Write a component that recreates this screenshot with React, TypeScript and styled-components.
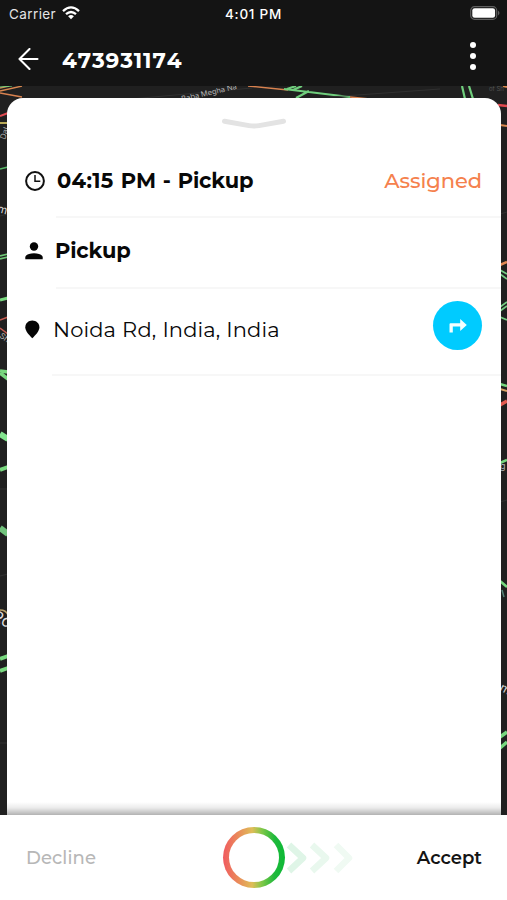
import React from "react";
import styled, { createGlobalStyle } from "styled-components";

const GlobalStyle = createGlobalStyle`
  * { box-sizing: border-box; }
  body { margin: 0; background: #fff; }
`;

const Screen = styled.div`
  display: grid;
  grid-template-rows: 28px 58px 729px 85px;
  width: 507px;
  height: 900px;
  overflow: hidden;
  font-family: Montserrat, Inter, sans-serif;
  color: #080808;
`;

const StatusBar = styled.div`
  display: grid;
  grid-template-columns: 1fr auto 1fr;
  align-items: center;
  padding: 0 7px 0 9px;
  background: #141414;
  color: #fff;
  font-family: Inter, sans-serif;
`;

const Carrier = styled.div`
  display: flex;
  align-items: center;
  gap: 6px;
  font-size: 13.5px;
  letter-spacing: 0.4px;
  color: #e4e4e4;
  svg { margin-top: -2px; }
`;

const Clock = styled.div`
  margin-left: -2px;
  font-size: 13.5px;
  font-weight: 500;
  letter-spacing: 0.75px;
`;

const BatterySlot = styled.div`
  display: flex;
  justify-content: flex-end;
  margin-top: -2px;
`;

const AppBar = styled.header`
  display: flex;
  align-items: center;
  padding: 3px 31px 0 18px;
  background: #141414;
  color: #fff;
  svg { display: block; }
`;

const Title = styled.h1`
  flex: 1;
  margin: 2px 0 0 22px;
  font-size: 21.5px;
  line-height: 26px;
  font-weight: 700;
  font-kerning: none;
  letter-spacing: 0.9px;
`;

const MenuButton = styled.div`
  display: grid;
  gap: 5px;
  margin-top: -6px;
`;

const Dot = styled.i`
  width: 6px;
  height: 6px;
  border-radius: 50%;
  background: #fff;
`;

const MapArea = styled.main`
  position: relative;
  display: flex;
  padding: 12px 6px 0 7px;
  background: #202020;
`;

const MapDrawing = styled.svg`
  position: absolute;
  inset: 0;
`;

const Sheet = styled.section`
  position: relative;
  flex: 1;
  border-radius: 16px 16px 0 0;
  background: #fff;
  overflow: hidden;
`;

const HandleRow = styled.div`
  display: flex;
  justify-content: center;
  height: 47px;
  padding-top: 18px;
`;

const FooterShade = styled.div`
  position: absolute;
  left: 0;
  right: 0;
  bottom: 0;
  height: 13px;
  background: linear-gradient(to bottom, rgba(0,0,0,0), rgba(0,0,0,0.08) 45%, rgba(0,0,0,0.3));
`;

const Row = styled.div<{ $height: number; $inset: number; $lift: number }>`
  position: relative;
  display: flex;
  align-items: center;
  height: ${(p) => p.$height}px;
  padding: 0 19px ${(p) => p.$lift}px 18px;
  &::after {
    content: "";
    position: absolute;
    left: ${(p) => p.$inset}px;
    right: 0;
    bottom: 0;
    height: 2px;
    background: #f7f7f7;
  }
`;

const IconSlot = styled.span<{ $width: number }>`
  flex: none;
  width: ${(p) => p.$width}px;
  svg { display: block; }
`;

const Label = styled.span<{ $weight: number; $spacing: number; $wordGap?: number }>`
  flex: 1;
  white-space: nowrap;
  font-size: 21px;
  font-weight: ${(p) => p.$weight};
  font-kerning: none;
  letter-spacing: ${(p) => p.$spacing}px;
  word-spacing: ${(p) => p.$wordGap ?? 0}px;
`;

const TimeDigits = styled.span`
  letter-spacing: 0.35px;
`;

const Status = styled.span`
  font-size: 21px;
  font-weight: 500;
  letter-spacing: -0.05px;
  color: #f5814d;
`;

const DirectionsButton = styled.button`
  display: grid;
  place-items: center;
  width: 49px;
  height: 49px;
  margin-top: -8px;
  padding: 0;
  border: 0;
  border-radius: 50%;
  background: #00cbff;
`;

const Footer = styled.footer`
  display: grid;
  grid-template-columns: 197px 1fr auto;
  align-items: center;
  padding: 0 25px 0 26px;
  background: #fff;
  svg { display: block; }
`;

const Action = styled.span<{ $muted?: boolean }>`
  font-size: 18px;
  font-weight: ${(p) => (p.$muted ? 500 : 600)};
  letter-spacing: ${(p) => (p.$muted ? 0.1 : 0)}px;
  color: ${(p) => (p.$muted ? "#b7b7b7" : "#141414")};
`;

const Swipe = styled.div`
  display: flex;
  align-items: center;
`;

const Ring = styled.div`
  width: 62px;
  height: 61px;
  padding: 6px;
  border-radius: 50%;
  background: linear-gradient(90deg, #f05a60 0%, #ea8a5a 24%, #dfbd58 47%, #7fc748 63%, #1fb93c 83%, #0cb935 100%);
  &::after {
    content: "";
    display: block;
    height: 100%;
    border-radius: 50%;
    background: #fff;
  }
`;

const roads = [
  { d: "M0 2L9 0M0 5L22 0", c: "#d98950", w: 1.3 },
  { d: "M0 7L22 11", c: "#d9824f", w: 1.3 },
  { d: "M0 1L12 0", c: "#74cf7b", w: 1 },
  { d: "M0 30L8 27", c: "#e24b52", w: 2 },
  { d: "M0 37L8 37", c: "#b8a957", w: 2 },
  { d: "M0 83L8 81", c: "#58b969", w: 1.5 },
  { d: "M0 170L8 168M0 173L8 171", c: "#6fc777", w: 1.7 },
  { d: "M0 214L8 212", c: "#78d77f", w: 3 },
  { d: "M0 234L8 231M0 242L8 248", c: "#c65b51", w: 1.5 },
  { d: "M0 285L8 286M0 287L8 293", c: "#78d77f", w: 3.5 },
  { d: "M0 348L8 353", c: "#83e48f", w: 6 },
  { d: "M0 384L8 381", c: "#78d77f", w: 4 },
  { d: "M0 442L8 448", c: "#71c27c", w: 6 },
  { d: "M0 524Q6 524 8 529", c: "#b8a06a", w: 1.5 },
  { d: "M0 573L8 570M0 585L8 582", c: "#78d77f", w: 4 },
  { d: "M248 0L288 4M350 11L380 14", c: "#d9824f", w: 1.5 },
  { d: "M284 3L350 11M287 3L296 0M293 4L302 0M296 12L309 5", c: "#70ce7d", w: 2.2 },
  { d: "M462 0L465 13M469 0L473 13", c: "#70ce7d", w: 2.2 },
  { d: "M498 19L507 20", c: "#e2494e", w: 2.5 },
  { d: "M500 39L507 40M503 0L507 1", c: "#d9884f", w: 2 },
  { d: "M500 179L507 176", c: "#e28954", w: 2.5 },
  { d: "M500 184L507 188M500 188L507 193M500 225L507 220M500 231L507 234M500 221L507 216", c: "#76cc83", w: 1.8 },
  { d: "M500 298L507 300M500 377L507 374M500 495L507 501", c: "#78d77f", w: 2.5 },
  { d: "M500 303L507 305", c: "#d9a465", w: 2 },
  { d: "M500 319L507 315", c: "#e45a50", w: 3.5 },
  { d: "M500 651L507 646M500 662L507 656", c: "#78d77f", w: 3.5 },
  { d: "M502 504L504 511", c: "#568278", w: 1.5 },
  { d: "M120 14L252 2M330 11L440 3M0 130L8 128M0 403H8M0 490L8 488M0 657H8M500 128L507 126M500 416L507 414", c: "#303030", w: 1 },
];

function MapLayer() {
  return (
    <MapDrawing width="507" height="729" viewBox="0 0 507 729" fill="none">
      {roads.map((r) => (
        <path key={r.d} d={r.d} stroke={r.c} strokeWidth={r.w} />
      ))}
      <g fill="#b3b3b3" fontFamily="Inter, sans-serif">
        <text x="182" y="15.5" fontSize="7.5" transform="rotate(-13 182 15.5)">Baba Megha Na</text>
        <text x="489" y="5" fontSize="6" fill="#555">of Sh</text>
        <text x="5" y="54" fontSize="8" transform="rotate(-70 5 54)">Dal</text>
        <text x="-3" y="126" fontSize="11" fill="#ddd" transform="rotate(14 -3 126)">m</text>
        <text x="-1" y="251" fontSize="8" transform="rotate(35 -1 251)">Sh</text>
        <text x="-9" y="534" fontSize="16" fill="#ddd" transform="rotate(25 -9 534)">Ro</text>
        <text x="500" y="383" fontSize="9">g</text>
        <text x="499" y="604" fontSize="12" fill="#ddd" transform="rotate(28 499 604)">m</text>
      </g>
    </MapDrawing>
  );
}

export default function App() {
  return (
    <>
      <GlobalStyle />
      <Screen>
        <StatusBar>
          <Carrier>
            Carrier
            <svg width="18" height="14" viewBox="0 0 18 14" fill="none" stroke="#fff" strokeWidth="2.3">
              <path d="M1 5.1Q9-2.3 17 5.1M4 8.2Q9 3.7 14 8.2" />
              <path d="M9 13.3L6.1 10.3Q9 7.8 11.9 10.3Z" fill="#fff" stroke="none" />
            </svg>
          </Carrier>
          <Clock>4:01 PM</Clock>
          <BatterySlot>
            <svg width="30" height="14" viewBox="0 0 30 14">
              <rect x=".7" y=".7" width="26" height="12.6" rx="3.8" fill="#141414" stroke="#606060" strokeWidth="1.2" />
              <rect x="2.3" y="2.3" width="22.8" height="9.4" rx="2.3" fill="#fff" />
              <path d="M28 4.5Q31 7 28 9.5Z" fill="#606060" />
            </svg>
          </BatterySlot>
        </StatusBar>
        <AppBar>
          <svg width="22" height="22" viewBox="0 0 22 22" fill="none" stroke="#fff" strokeWidth="2.1">
            <path d="M11.5 1L1.5 11L11.5 21M1.5 11H19.5" strokeLinecap="round" strokeLinejoin="round" />
          </svg>
          <Title>473931174</Title>
          <MenuButton><Dot /><Dot /><Dot /></MenuButton>
        </AppBar>
        <MapArea>
          <MapLayer />
          <Sheet>
            <HandleRow>
              <svg width="66" height="15" viewBox="0 0 66 15" fill="none">
                <path d="M3.5 5.2L28 9.6Q33 10.4 38 9.6L62.5 5.2" stroke="#e3e3e3" strokeWidth="5" strokeLinecap="round" />
              </svg>
            </HandleRow>
            <Row $height={73} $inset={49} $lift={2}>
              <IconSlot $width={32}>
                <svg width="20" height="20" viewBox="0 0 20 20" fill="none" stroke="#111">
                  <circle cx="10" cy="10" r="8.9" strokeWidth="2" />
                  <path d="M10 4V10.3H15.3" strokeWidth="1.5" />
                </svg>
              </IconSlot>
              <Label $weight={700} $spacing={-0.2} $wordGap={1.3}>
                <TimeDigits>04:15</TimeDigits> PM - Pickup
              </Label>
              <Status>Assigned</Status>
            </Row>
            <Row $height={71} $inset={49} $lift={6}>
              <IconSlot $width={30}>
                <svg width="18" height="18" viewBox="0 0 18 18" fill="#050505">
                  <circle cx="9" cy="4.5" r="4.2" />
                  <path d="M.3 17.3V15.5C.3 9.7 17.7 9.7 17.7 15.5V17.3Z" />
                </svg>
              </IconSlot>
              <Label $weight={700} $spacing={-0.2}>Pickup</Label>
            </Row>
            <Row $height={87} $inset={45} $lift={6}>
              <IconSlot $width={28}>
                <svg width="15" height="19" viewBox="0 0 15 19" fill="#050505">
                  <path d="M7.3 18.3C3.8 14.8.3 11.2.3 7.3C.3 3.4 3.5.6 7.3.6S14.4 3.4 14.4 7.3C14.4 11.2 10.8 14.8 7.3 18.3Z" />
                </svg>
              </IconSlot>
              <Label $weight={400} $spacing={0.1} $wordGap={0.5}>Noida Rd, India, India</Label>
              <DirectionsButton aria-label="Directions">
                <svg width="18" height="16" viewBox="0 0 18 16" fill="#f4ffff">
                  <path d="M.5 14.5V6.2Q.5 5.2 1.5 5.2H11.2V1L17.8 7L11.2 13.1V8.5H3.8V14.5Z" />
                </svg>
              </DirectionsButton>
            </Row>
            <FooterShade />
          </Sheet>
        </MapArea>
        <Footer>
          <Action $muted>Decline</Action>
          <Swipe>
            <Ring />
            <svg width="70" height="36" viewBox="0 0 70 36" fill="none" strokeWidth="6.5" strokeLinejoin="round">
              <path d="M4 5L18 18L4 31" stroke="#dff5e7" />
              <path d="M27 5L41 18L27 31" stroke="#e9f8ee" />
              <path d="M51 5L64 18L51 31" stroke="#f0faf3" />
            </svg>
          </Swipe>
          <Action>Accept</Action>
        </Footer>
      </Screen>
    </>
  );
}
